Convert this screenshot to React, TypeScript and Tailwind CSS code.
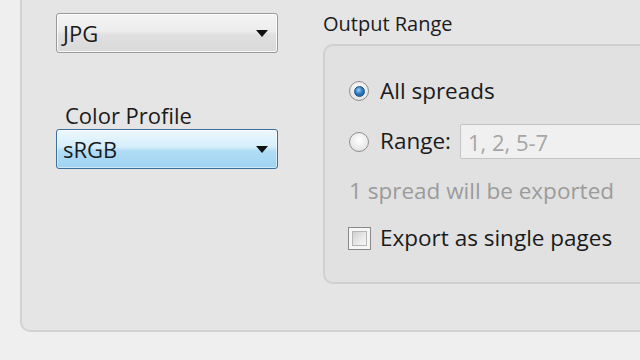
import React from "react";

const font = { fontFamily: '"Open Sans", "Noto Sans", sans-serif' };

function Arrow() {
  return (
    <svg width="12" height="7" viewBox="0 0 12 7" className="shrink-0">
      <path d="M0 0 H12 L6 7 Z" fill="#111" />
    </svg>
  );
}

function Select({ value, active }: { value: string; active?: boolean }) {
  return (
    <div
      className={
        active
          ? "flex h-[40px] w-[222px] items-center justify-between rounded-[3px] border border-[#3c6f99] bg-[linear-gradient(to_bottom,#eef8fe_0%,#d5eefc_45%,#b0dcf6_55%,#9fd3f2_100%)] pl-[6px] pr-[9px] shadow-[inset_0_0_0_1px_rgba(255,255,255,0.5)]"
          : "flex h-[40px] w-[222px] items-center justify-between rounded-[3px] border border-[#9a9a9a] bg-[linear-gradient(to_bottom,#f4f4f4_0%,#ececec_45%,#e0e0e0_55%,#d9d9d9_100%)] pl-[6px] pr-[9px] shadow-[inset_0_0_0_1px_rgba(255,255,255,0.8)]"
      }
    >
      <span className="text-[22px] leading-none text-[#1b1b1b]">{value}</span>
      <Arrow />
    </div>
  );
}

function Radio({ checked }: { checked?: boolean }) {
  return (
    <div className="flex h-[20px] w-[20px] shrink-0 items-center justify-center rounded-full border border-[#8f8f8f] bg-[radial-gradient(circle_at_50%_40%,#ffffff_0%,#e6e6e6_70%,#cfcfcf_100%)]">
      {checked && (
        <div className="h-[11px] w-[11px] rounded-full border border-[#1d4f80] bg-[radial-gradient(circle_at_40%_35%,#9fd2fb_0%,#2f7fc4_45%,#134f8c_100%)]" />
      )}
    </div>
  );
}

function Checkbox() {
  return (
    <div className="flex h-[23px] w-[23px] shrink-0 items-center justify-center border border-[#8a8a8a] bg-[#f6f6f6]">
      <div className="h-[15px] w-[15px] border border-[#b5b5b5] bg-[linear-gradient(135deg,#cfcfcf_0%,#eaeaea_60%,#f6f6f6_100%)]" />
    </div>
  );
}

export default function App() {
  return (
    <div className="h-[360px] w-[640px] overflow-hidden bg-[#efefef]" style={font}>
      <div className="ml-[20px] flex h-[332px] w-[700px] rounded-bl-[10px] border-b-2 border-l-2 border-[#d2d2d2] bg-[#e5e5e5]">
        <div className="flex w-[301px] shrink-0 flex-col pl-[34px] pt-[13px]">
          <Select value="JPG" />
          <div className="mt-[48px] pl-[9px] text-[22px] leading-[28px] text-[#1b1b1b]">Color Profile</div>
          <Select value="sRGB" active />
        </div>
        <div className="flex flex-1 flex-col pt-[11px]">
          <div className="h-[29px] text-[20px] leading-[26px] text-[#1b1b1b]">Output Range</div>
          <div className="mt-[4px] h-[240px] rounded-tl-[10px] rounded-bl-[10px] border-2 border-[#d0d0d0] bg-[#e1e1e1] pl-[23px] pt-[30px]">
            <div className="flex h-[30px] items-center gap-[11px] pl-[1px]">
              <Radio checked />
              <span className="text-[22.5px] leading-none text-[#1b1b1b]">All spreads</span>
            </div>
            <div className="mt-[18px] flex h-[35px] items-center pl-[1px]">
              <Radio />
              <span className="ml-[11px] text-[22.5px] leading-none text-[#1b1b1b]">Range:</span>
              <div className="ml-[9px] flex h-[35px] flex-1 items-center rounded-[2px] border border-[#c4c4c4] bg-[#f0f0f0] pl-[7px]">
                <span className="text-[22px] leading-none text-[#a6a6a6]">1, 2, 5-7</span>
              </div>
            </div>
            <div className="mt-[17px] flex h-[30px] items-center pl-[1px]">
              <span className="text-[22.5px] leading-none text-[#9b9b9b]">1 spread will be exported</span>
            </div>
            <div className="mt-[17px] flex h-[30px] items-center gap-[9px]">
              <Checkbox />
              <span className="text-[22.5px] leading-none text-[#1b1b1b]">Export as single pages</span>
            </div>
          </div>
        </div>
      </div>
    </div>
  );
}
